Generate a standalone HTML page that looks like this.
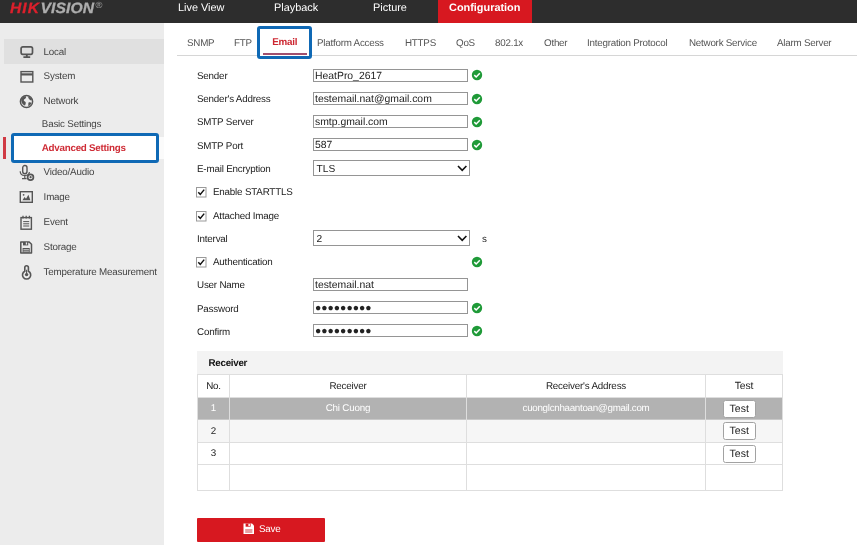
<!DOCTYPE html>
<html>
<head>
<meta charset="utf-8">
<title>Configuration</title>
<style>
*{box-sizing:border-box;margin:0;padding:0}
html,body{width:857px;height:545px;overflow:hidden;background:#fff}
body{position:relative;will-change:transform;text-rendering:geometricPrecision;font-family:"Liberation Sans",Arial,sans-serif;font-size:9.8px;letter-spacing:-0.19px;color:#333}
.abs{position:absolute;white-space:nowrap}
#hdr{position:absolute;left:0;top:0;width:857px;height:22.5px;background:#2d2d2d}
#logo{position:absolute;left:9.8px;top:-1.2px;font-size:15px;font-weight:bold;font-style:italic;letter-spacing:0.3px;line-height:20px;-webkit-text-stroke:0.3px currentColor;white-space:nowrap;transform:scaleX(1.045);transform-origin:0 0}
#logo .h{color:#dc202c;letter-spacing:1px}
#logo .v{color:#adadad;margin-left:0.3px;letter-spacing:0.1px}
#logo .r{font-size:9px;font-weight:normal;font-style:normal;color:#a0a0a0;position:relative;top:-4.6px;left:1.2px;-webkit-text-stroke:0;letter-spacing:0}
.nav{letter-spacing:0;position:absolute;top:1.2px;height:21px;line-height:15px;color:#fff;font-size:10.9px}
#cfg{letter-spacing:0;position:absolute;left:438px;top:0;width:93.5px;height:22.5px;background:#d71820;color:#fff;font-weight:bold;font-size:10.9px;text-align:center;line-height:17.4px}
#side{position:absolute;left:0;top:22.5px;width:163.5px;height:522.5px;background:#ececec}
#local{position:absolute;left:3.5px;top:39.4px;width:160px;height:24.2px;background:#e0e0e0}
.mi{position:absolute;left:43.6px;color:#444;font-size:9.8px;line-height:12px;white-space:nowrap}
.ic{position:absolute;left:20px;width:16px;height:16px}
#advbox{position:absolute;left:10.8px;top:132.7px;width:148.4px;height:30.8px;background:#fff;border:3.8px solid #0f69b5;border-radius:3px}
#redbar{position:absolute;left:3.4px;top:136.7px;width:2.3px;height:22.8px;background:#d03a44}
.tab{letter-spacing:-0.23px;position:absolute;top:38.4px;color:#555;font-size:9.8px;line-height:12px;white-space:nowrap}
#tabline{position:absolute;left:177px;top:55px;width:680px;height:1px;background:#d6d6d6}
#emailbox{position:absolute;left:257px;top:26px;width:54.8px;height:32.6px;border:3.8px solid #0f69b5;border-radius:3px;background:#fff}
#emailul{position:absolute;left:262.5px;top:53.4px;width:44px;height:1.7px;background:#a0506e}
.lbl{position:absolute;left:197px;color:#222;font-size:9.8px;line-height:12px;white-space:nowrap}
.inp{letter-spacing:0;position:absolute;left:313px;width:155px;height:13px;border:1px solid #959595;background:#fff;font-size:10.4px;line-height:13.6px;color:#222;padding-left:1px;white-space:nowrap;overflow:hidden}
.sel{letter-spacing:0;position:absolute;left:313px;width:157px;height:15.4px;border:1px solid #959595;background:#fff;font-size:10.2px;line-height:17.4px;color:#222;padding-left:2.5px}
.ok{position:absolute;left:471px;width:12px;height:12px}
.cb{position:absolute;left:197px;width:9px;height:9px;border:1px solid #777;background:#fff}
#tbl{position:absolute;left:197px;top:352px;width:586px;height:139px}
.cell{margin-top:1.3px;position:absolute;font-size:9.8px;line-height:12px;text-align:center;color:#222;white-space:nowrap}
.hl{position:absolute;background:#dedede;height:1px}
.vl{position:absolute;background:#dedede;width:1px}
.tb{letter-spacing:0;position:absolute;left:723px;width:32.5px;height:18px;border:1px solid #a2a2a2;border-radius:2.5px;background:#fff;font-size:10.5px;line-height:17.4px;text-align:center;color:#222}
#save{position:absolute;left:197px;top:518px;width:128px;height:23.6px;background:#d71820;border-radius:1px;color:#fff;font-size:9.8px;line-height:23px}
</style>
</head>
<body>
<div id="hdr">
  <div id="logo"><span class="h">HIK</span><span class="v">VISION</span><span class="r">®</span></div>
  <div class="nav" style="left:178px">Live View</div>
  <div class="nav" style="left:274px">Playback</div>
  <div class="nav" style="left:373px">Picture</div>
  <div id="cfg">Configuration</div>
</div>
<div id="side"></div>
<div id="local"></div>
<div class="mi" style="top:46.5px">Local</div>
<div class="mi" style="top:71.4px">System</div>
<div class="mi" style="top:95.8px">Network</div>
<div class="mi" style="top:119.4px;left:41.8px">Basic Settings</div>
<div class="abs" style="left:14px;top:136.7px;width:149.500px;height:22.8px;background:#fbfbfb"></div>
<div id="redbar"></div>
<div id="advbox"></div>
<div class="mi" style="top:142.8px;left:41.8px;color:#cf2c36;font-weight:bold;letter-spacing:-0.26px">Advanced Settings</div>
<div class="mi" style="top:167.1px">Video/Audio</div>
<div class="mi" style="top:191.9px">Image</div>
<div class="mi" style="top:216.9px">Event</div>
<div class="mi" style="top:241.6px">Storage</div>
<div class="mi" style="top:266.9px">Temperature Measurement</div>


<!-- sidebar icons -->
<svg class="abs" style="left:18px;top:44px" width="18" height="16" viewBox="0 0 18 16"><rect x="3.100" y="2.800" width="11.400" height="7.500" rx="1.700" fill="none" stroke="#555" stroke-width="1.700"/><path d="M8.800 10.300 V13 M5.400 13.200 H12.200" fill="none" stroke="#555" stroke-width="1.800"/></svg>
<svg class="abs" style="left:18px;top:69px" width="18" height="16" viewBox="0 0 18 16"><rect x="3" y="2.6" width="11.8" height="10.4" fill="none" stroke="#555" stroke-width="1.4"/><path d="M3 5.400 H14.800" stroke="#555" stroke-width="2.200"/></svg>
<svg class="abs" style="left:18px;top:93px" width="18" height="17" viewBox="0 0 18 17"><circle cx="8.500" cy="8.500" r="6.100" fill="none" stroke="#555" stroke-width="1.500"/><path d="M3.2 6.2 C4.5 4 6.5 3 8 3.2 C8.6 4.6 7.2 5.8 6 6.6 C5.4 7.6 6.2 8.4 7.2 8.8 C8.2 9.4 7.8 11 7 12.6 C5 12 3 9.6 3.2 6.2 Z M10.4 3.4 C12 3.8 13.6 5.2 14 7 C13 7.8 11.6 7.2 11.2 6 C10.4 5.4 10 4.4 10.4 3.4 Z M10.6 9.4 C11.8 9 13 9.4 13.6 10 C13 11.6 11.6 12.8 10.2 13.4 C10.6 12 10 10.6 10.6 9.4 Z" fill="#555"/></svg>
<svg class="abs" style="left:18px;top:164px" width="18" height="18" viewBox="0 0 18 18"><rect x="4.700" y="1.500" width="4.300" height="8.200" rx="2.150" fill="none" stroke="#555" stroke-width="1.400"/><path d="M2.2 7.2 C2.2 13 11 12.6 11.4 8" fill="none" stroke="#555" stroke-width="1.2"/><path d="M6.8 11.6 V14.4 M4 14.6 H8.6" stroke="#555" stroke-width="1.2" fill="none"/><circle cx="12.500" cy="13.200" r="2.900" fill="#ececec" stroke="#555" stroke-width="1.700"/><circle cx="12.600" cy="13.200" r="1.100" fill="#555"/></svg>
<svg class="abs" style="left:18px;top:189px" width="18" height="16" viewBox="0 0 18 16"><rect x="2.3" y="2.7" width="12" height="10.6" fill="none" stroke="#555" stroke-width="1.4"/><path d="M4.4 11.2 L6.6 8 L8 9.8 L10.4 5.8 L12.4 11.2 Z" fill="#555"/><circle cx="5.6" cy="5.8" r="0.9" fill="#555"/></svg>
<svg class="abs" style="left:18px;top:214px" width="18" height="18" viewBox="0 0 18 18"><rect x="3" y="3.6" width="10.4" height="11.6" fill="none" stroke="#555" stroke-width="1.4"/><path d="M5 1.8 V4.4 M8.2 1.8 V4.4 M11.4 1.8 V4.4" stroke="#555" stroke-width="1.3"/><path d="M5.2 7.6 H11.2 M5.2 9.8 H11.2 M5.2 12 H11.2" stroke="#555" stroke-width="1"/></svg>
<svg class="abs" style="left:18px;top:239px" width="18" height="17" viewBox="0 0 18 17"><path d="M2.800 3 H11.200 L13.500 5.300 V14 H2.800 Z" fill="none" stroke="#555" stroke-width="1.500" stroke-linejoin="round"/><rect x="5" y="3" width="5.2" height="3.4" fill="#555"/><rect x="7.8" y="3.4" width="1.3" height="2.2" fill="#ececec"/><rect x="4.600" y="9" width="7.100" height="4.600" fill="#555"/><path d="M5.400 10.600 H10.900 M5.400 12.200 H10.900" stroke="#ececec" stroke-width="0.700"/></svg>
<svg class="abs" style="left:18px;top:263px" width="18" height="18" viewBox="0 0 18 18"><path d="M6.800 8.200 V4.600 A1.800 1.800 0 0 1 10.400 4.600 V8.200 A4.100 4.100 0 1 1 6.800 8.200 Z" fill="none" stroke="#555" stroke-width="1.600"/><circle cx="8.600" cy="11.600" r="1.700" fill="#555"/><path d="M8.600 6.800 V11" stroke="#555" stroke-width="1.100"/></svg>

<div id="tabline"></div>
<div id="emailbox"></div>
<div id="emailul"></div>
<div class="tab" style="left:187px">SNMP</div>
<div class="tab" style="left:234px">FTP</div>
<div class="tab" style="left:272.3px;color:#cc2630;font-weight:bold;top:37.4px">Email</div>
<div class="tab" style="left:317px">Platform Access</div>
<div class="tab" style="left:405px">HTTPS</div>
<div class="tab" style="left:456px">QoS</div>
<div class="tab" style="left:495px">802.1x</div>
<div class="tab" style="left:544px">Other</div>
<div class="tab" style="left:587px">Integration Protocol</div>
<div class="tab" style="left:689px">Network Service</div>
<div class="tab" style="left:777px">Alarm Server</div>

<div class="lbl" style="top:70.9px">Sender</div>
<div class="lbl" style="top:94.2px">Sender's Address</div>
<div class="lbl" style="top:117.4px">SMTP Server</div>
<div class="lbl" style="top:140.7px">SMTP Port</div>
<div class="lbl" style="top:164px">E-mail Encryption</div>
<div class="lbl" style="top:187.3px;left:213px">Enable STARTTLS</div>
<div class="lbl" style="top:210.5px;left:213px">Attached Image</div>
<div class="lbl" style="top:233.8px">Interval</div>
<div class="lbl" style="top:257.1px;left:213px">Authentication</div>
<div class="lbl" style="top:280.3px">User Name</div>
<div class="lbl" style="top:303.6px">Password</div>
<div class="lbl" style="top:326.9px">Confirm</div>

<div class="inp" style="top:68.5px;height:13.5px">HeatPro_2617</div>
<div class="inp" style="top:92px">testemail.nat@gmail.com</div>
<div class="inp" style="top:115px">smtp.gmail.com</div>
<div class="inp" style="top:138px">587</div>
<div class="sel" style="top:160.2px">TLS</div>
<div class="sel" style="top:230.2px">2</div>
<div class="inp" style="top:278px">testemail.nat</div>
<div class="inp" style="top:301px">●●●●●●●●●</div>
<div class="inp" style="top:324px">●●●●●●●●●</div>
<div class="lbl" style="top:233.6px;left:482px">s</div>


<!-- checkboxes -->
<svg class="abs" style="left:196.2px;top:187.4px" width="11" height="11" viewBox="0 0 11 11"><rect x="0.5" y="0.5" width="9.5" height="9.5" fill="#fff" stroke="#9a9a9a" stroke-width="1"/><path d="M2.3 5.2 L4.3 7.4 L8.2 2.6" fill="none" stroke="#111" stroke-width="1.5"/></svg>
<svg class="abs" style="left:196.2px;top:210.6px" width="11" height="11" viewBox="0 0 11 11"><rect x="0.5" y="0.5" width="9.5" height="9.5" fill="#fff" stroke="#9a9a9a" stroke-width="1"/><path d="M2.3 5.2 L4.3 7.4 L8.2 2.6" fill="none" stroke="#111" stroke-width="1.5"/></svg>
<svg class="abs" style="left:196.2px;top:257.2px" width="11" height="11" viewBox="0 0 11 11"><rect x="0.5" y="0.5" width="9.5" height="9.5" fill="#fff" stroke="#9a9a9a" stroke-width="1"/><path d="M2.3 5.2 L4.3 7.4 L8.2 2.6" fill="none" stroke="#111" stroke-width="1.5"/></svg>

<!-- select arrows -->
<svg class="abs" style="left:456px;top:164px" width="12" height="9" viewBox="0 0 12 9"><path d="M2 2 L6.2 6.4 L10.4 2" fill="none" stroke="#111" stroke-width="1.6"/></svg>
<svg class="abs" style="left:456px;top:234px" width="12" height="9" viewBox="0 0 12 9"><path d="M2 2 L6.2 6.4 L10.4 2" fill="none" stroke="#111" stroke-width="1.6"/></svg>

<!-- green ok icons -->
<svg class="ok" style="top:69.3px" viewBox="0 0 12 12"><circle cx="6" cy="6" r="5.200" fill="#1f9a38"/><path d="M3.3 6.1 L5.2 8 L8.8 4.2" fill="none" stroke="#fff" stroke-width="1.5"/></svg>
<svg class="ok" style="top:93px" viewBox="0 0 12 12"><circle cx="6" cy="6" r="5.200" fill="#1f9a38"/><path d="M3.3 6.1 L5.2 8 L8.8 4.2" fill="none" stroke="#fff" stroke-width="1.5"/></svg>
<svg class="ok" style="top:116px" viewBox="0 0 12 12"><circle cx="6" cy="6" r="5.200" fill="#1f9a38"/><path d="M3.3 6.1 L5.2 8 L8.8 4.2" fill="none" stroke="#fff" stroke-width="1.5"/></svg>
<svg class="ok" style="top:139px" viewBox="0 0 12 12"><circle cx="6" cy="6" r="5.200" fill="#1f9a38"/><path d="M3.3 6.1 L5.2 8 L8.8 4.2" fill="none" stroke="#fff" stroke-width="1.5"/></svg>
<svg class="ok" style="top:256px" viewBox="0 0 12 12"><circle cx="6" cy="6" r="5.200" fill="#1f9a38"/><path d="M3.3 6.1 L5.2 8 L8.8 4.2" fill="none" stroke="#fff" stroke-width="1.5"/></svg>
<svg class="ok" style="top:302px" viewBox="0 0 12 12"><circle cx="6" cy="6" r="5.200" fill="#1f9a38"/><path d="M3.3 6.1 L5.2 8 L8.8 4.2" fill="none" stroke="#fff" stroke-width="1.5"/></svg>
<svg class="ok" style="top:325px" viewBox="0 0 12 12"><circle cx="6" cy="6" r="5.200" fill="#1f9a38"/><path d="M3.3 6.1 L5.2 8 L8.8 4.2" fill="none" stroke="#fff" stroke-width="1.5"/></svg>

<!-- table -->
<div class="abs" style="left:197px;top:351px;width:586px;height:23px;background:#f3f3f3"></div>
<div class="abs" style="left:197px;top:397px;width:586px;height:23px;background:#b2b2b2"></div>
<div class="abs" style="left:197px;top:420px;width:586px;height:22px;background:#f6f6f6"></div>
<div class="hl" style="left:197px;top:374px;width:586px"></div>
<div class="hl" style="left:197px;top:397px;width:586px"></div>
<div class="hl" style="left:197px;top:419px;width:586px;background:#c8c8c8"></div>
<div class="hl" style="left:197px;top:442px;width:586px"></div>
<div class="hl" style="left:197px;top:464px;width:586px"></div>
<div class="hl" style="left:197px;top:490px;width:586px"></div>
<div class="vl" style="left:197px;top:374px;height:117px"></div>
<div class="vl" style="left:229px;top:374px;height:117px"></div>
<div class="vl" style="left:466px;top:374px;height:117px"></div>
<div class="vl" style="left:705px;top:374px;height:117px"></div>
<div class="vl" style="left:782px;top:374px;height:117px"></div>
<div class="cell" style="left:208.6px;top:357.2px;font-weight:bold;color:#111;text-align:left;letter-spacing:-0.3px">Receiver</div>
<div class="cell" style="left:197px;width:33px;top:380px">No.</div>
<div class="cell" style="left:229px;width:238px;top:380px">Receiver</div>
<div class="cell" style="left:466px;width:240px;top:380px">Receiver's Address</div>
<div class="cell" style="left:705px;width:78px;top:380px;font-size:10.4px">Test</div>
<div class="cell" style="left:197px;width:33px;top:402px;color:#fff">1</div>
<div class="cell" style="left:229px;width:238px;top:402px;color:#fff">Chi Cuong</div>
<div class="cell" style="left:466px;width:240px;top:402px;color:#fff;letter-spacing:-0.3px">cuonglcnhaantoan@gmail.com</div>
<div class="cell" style="left:197px;width:33px;top:425px">2</div>
<div class="cell" style="left:197px;width:33px;top:447px">3</div>
<div class="tb" style="top:399.5px">Test</div>
<div class="tb" style="top:422px">Test</div>
<div class="tb" style="top:444.5px">Test</div>

<div id="save"><svg style="position:absolute;left:46px;top:5px" width="12" height="12" viewBox="0 0 12 12"><path d="M0.500 0.500 H9 L11 2.500 V11 H0.500 Z" fill="#fff"/><rect x="2.600" y="0.500" width="5" height="3.200" fill="#d71820"/><rect x="5.400" y="0.900" width="1.500" height="2.200" fill="#fff"/><rect x="2.200" y="6" width="7.200" height="4" fill="#e8a0a4"/></svg><span style="position:absolute;left:62px">Save</span></div>
</body>
</html>
